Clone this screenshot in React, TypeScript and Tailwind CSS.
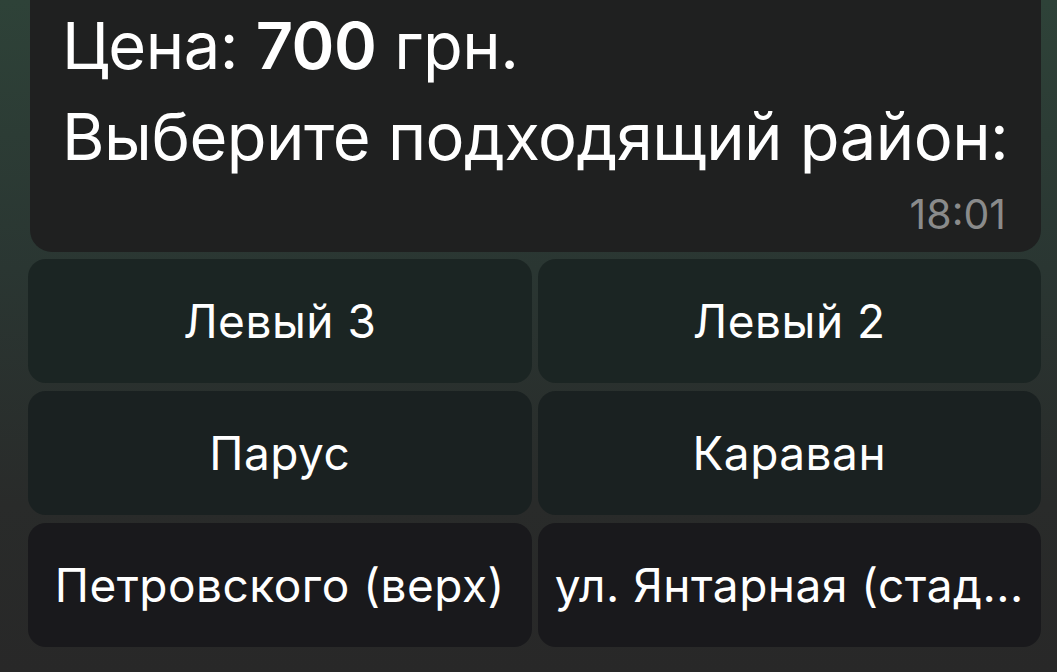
import React from 'react';

const districts = [{
  label: 'Левый 3',
  bg: 'bg-[#1b2523]'
}, {
  label: 'Левый 2',
  bg: 'bg-[#1b2523]'
}, {
  label: 'Парус',
  bg: 'bg-[#1a2121]'
}, {
  label: 'Караван',
  bg: 'bg-[#1a2121]'
}, {
  label: 'Петровского (верх)',
  bg: 'bg-[#19191c]'
}, {
  label: 'ул. Янтарная (стад...',
  bg: 'bg-[#19191c]'
}];

export default function App() {
  return <div className="h-[672px] w-full overflow-hidden bg-[linear-gradient(180deg,#2e4238_0%,#2a3632_40%,#292b2a_75%,#282828_100%)] font-['Inter','Noto_Sans',sans-serif] text-white">
      {/* Message bubble */}
      <div className="pl-[30px] pr-[16px]">
        <div className="rounded-b-[22px] bg-[#1f2020] pl-[32px] pr-[35px] pb-[14px]">
          <div className="whitespace-nowrap text-[65px] leading-[91px] tracking-[-0.5px]">
            <div>
              Цена: <span className="font-semibold">700</span> грн.
            </div>
            <div>Выберите подходящий район:</div>
          </div>
          <div className="mt-[8px] flex justify-end text-[41px] leading-[48px] text-[#8a8b8b]">
            18:01
          </div>
        </div>
      </div>
      {/* Inline keyboard */}
      <div className="mt-[7px] grid grid-cols-2 gap-x-[6px] gap-y-[8px] pl-[28px] pr-[16px]">
        {districts.map(d => <button key={d.label} className={`flex h-[124px] items-center justify-center overflow-hidden whitespace-nowrap rounded-[18px] px-1 text-[46px] tracking-[0.5px] text-white ${d.bg}`}>
            {d.label}
          </button>)}
      </div>
    </div>;
}
